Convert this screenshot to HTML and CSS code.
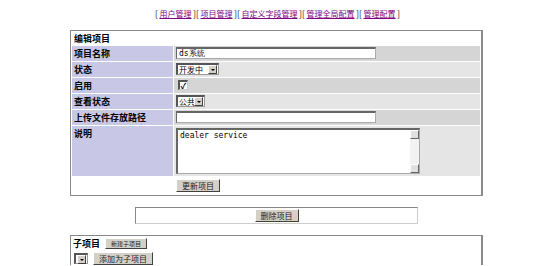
FILE: index.html
```html
<!DOCTYPE html>
<html>
<head>
<meta charset="utf-8">
<link rel="stylesheet" href="styles.css">
</head>
<body>
<div class="nav">[ <a href="#">用户管理</a> ][ <a href="#">项目管理</a> ][ <a href="#">自定义字段管理</a> ][ <a href="#">管理全局配置</a> ][ <a href="#">管理配置</a> ]</div>

<table class="form">
  <tr class="head"><td colspan="2">编辑项目</td></tr>
  <tr class="r1"><th>项目名称</th><td><input class="text" type="text" value="ds系统"></td></tr>
  <tr class="r2"><th>状态</th><td><span class="sel w43">开发中<i class="arr"></i></span></td></tr>
  <tr class="r1"><th>启用</th><td><span class="chk">✓</span></td></tr>
  <tr class="r2"><th>查看状态</th><td><span class="sel w29">公共<i class="arr"></i></span></td></tr>
  <tr class="r1"><th>上传文件存放路径</th><td><input class="text" type="text" value=""></td></tr>
  <tr class="r2 tall"><th>说明</th><td><div class="area">dealer service<div class="sb"><i class="up"></i><i class="dn"></i></div></div></td></tr>
  <tr class="foot"><td></td><td><button class="btn">更新项目</button></td></tr>
</table>

<div class="delbox"><button class="btn">删除项目</button></div>

<div class="sub">
  <div class="subrow"><b>子项目</b><button class="btn small">新建子项目</button></div>
  <div class="subrow"><span class="sel w15"><i class="arr"></i></span><button class="btn">添加为子项目</button></div>
</div>
</body>
</html>
```

FILE: styles.css
```css
html, body { margin: 0; padding: 0; background: #fff; }
body {
  font-family: "Noto Sans CJK SC", "DejaVu Sans", sans-serif;
  font-size: 9px;
  color: #000;
  padding-top: 8px;
  height: 266px;
  overflow: hidden;
}
.nav { text-align: center; font-size: 8px; line-height: 11px; height: 11px; padding-left: 2px; }
.nav a { color: #800080; text-decoration: underline; }

.form {
  display: table;
  margin: 11px auto 0;
  width: 413px;
  border-collapse: separate;
  border-spacing: 1px;
  background: #fff;
  border: 1px solid #8a8a8a;
  border-right: 2px solid #8a8a8a;
  box-sizing: border-box;
}
.form td, .form th { padding: 0 2px; vertical-align: top; text-align: left; }
.form th { width: 101px; background: #c8c8e6; font-weight: bold; font-size: 9px; line-height: 13px; padding-top: 1px; height: 14px; box-sizing: border-box; }
.head td { font-weight: bold; height: 13px; line-height: 13px; background: #fff; }
.r1 td { background: #d5d5d5; }
.r2 td { background: #e5e5e5; }
.r1 td, .r2 td { padding-top: 1px; height: 14px; box-sizing: border-box; }
.form tr.r1 th, .form tr.r2 th { height: 15px; }
.form tr.r1 td, .form tr.r2 td { height: 15px; }
.form tr.tall td, .form tr.tall th { height: 50px; }
.foot td { background: #fff; height: 17px; padding-top: 2px; box-sizing: border-box; }

.text {
  display: block;
  width: 200px; height: 12px; box-sizing: border-box;
  border: 1px solid #aaa; border-left: 1px solid #666;
  border-top: 2px solid #666;
  font: 8px "DejaVu Sans Mono", monospace;
  padding: 0 2px; margin: 0;
  background: #fff;
}
.sel {
  display: inline-flex; align-items: center; position: relative;
  height: 12px; box-sizing: border-box;
  border: 1px solid #999; border-top: 2px solid #555; border-left: 2px solid #555;
  background: #fff; font-size: 8px; line-height: 9px; padding-left: 1px;
  vertical-align: top;
}
.w43 { width: 43px; }
.w29 { width: 29px; }
.w15 { width: 14px; padding-left: 0; }
.arr {
  position: absolute; right: 1px; top: 0px; width: 7px; height: 7px;
  background: #d4d0c8; border: 1px solid #fff; border-right-color: #404040; border-bottom-color: #404040;
}
.arr::after {
  content: ""; position: absolute; left: 2px; top: 3px;
  border-left: 2px solid transparent; border-right: 2px solid transparent; border-top: 2px solid #000;
}
.chk {
  display: block; margin: 1px 0 0 2px; font-size: 8px; line-height: 7px; width: 7px; height: 7px;
  font-weight: bold; text-align: center;
  border: 1px solid #ccc; border-top: 2px solid #555; border-left: 2px solid #555; background: #fff;
}

.area {
  position: relative;
  width: 244px; height: 46px; box-sizing: border-box;
  border: 1px solid #aaa; border-top: 2px solid #666; border-left: 2px solid #666;
  background: #fff;
  font: 8px "DejaVu Sans Mono", monospace;
  padding: 1px 2px;
  margin-top: 1px;
}
.sb { position: absolute; right: 0; top: 0; bottom: 0; width: 9px; background: #f2f2f2; }
.sb i { position: absolute; left: 0; width: 7px; height: 7px; background: #e0e0e0; border: 1px solid #fff; border-right-color: #666; border-bottom-color: #666; }
.sb .up { top: 0; }
.sb .dn { bottom: 0; }

.btn {
  font-family: "Noto Sans CJK SC", sans-serif;
  font-size: 8px; line-height: 10px; height: 13px;
  padding: 0 5px; margin: 0;
  background: #d4d0c8;
  border: 1px solid #fff; border-right-color: #404040; border-bottom-color: #404040;
  color: #222;
  display: block;
}
.small { font-size: 6px; height: 11px; line-height: 8px; }

.delbox {
  width: 283px; margin: 11px auto 0; height: 17px; box-sizing: border-box;
  border: 1px solid #888; border-right-color: #ccc; border-bottom-color: #ccc;
  display: flex; justify-content: center; align-items: center;
}
.sub {
  width: 413px; margin: 11px auto 0; box-sizing: border-box;
  border: 1px solid #888; border-right: 2px solid #8a8a8a; border-bottom: none;
  padding: 1px 2px; height: 30px; overflow: hidden;
}
.subrow { display: flex; align-items: center; gap: 5px; height: 13px; margin-bottom: 2px; }
.subrow b { font-size: 9px; }
.subrow .w15 { margin-left: 1px; height: 11px; }
```
